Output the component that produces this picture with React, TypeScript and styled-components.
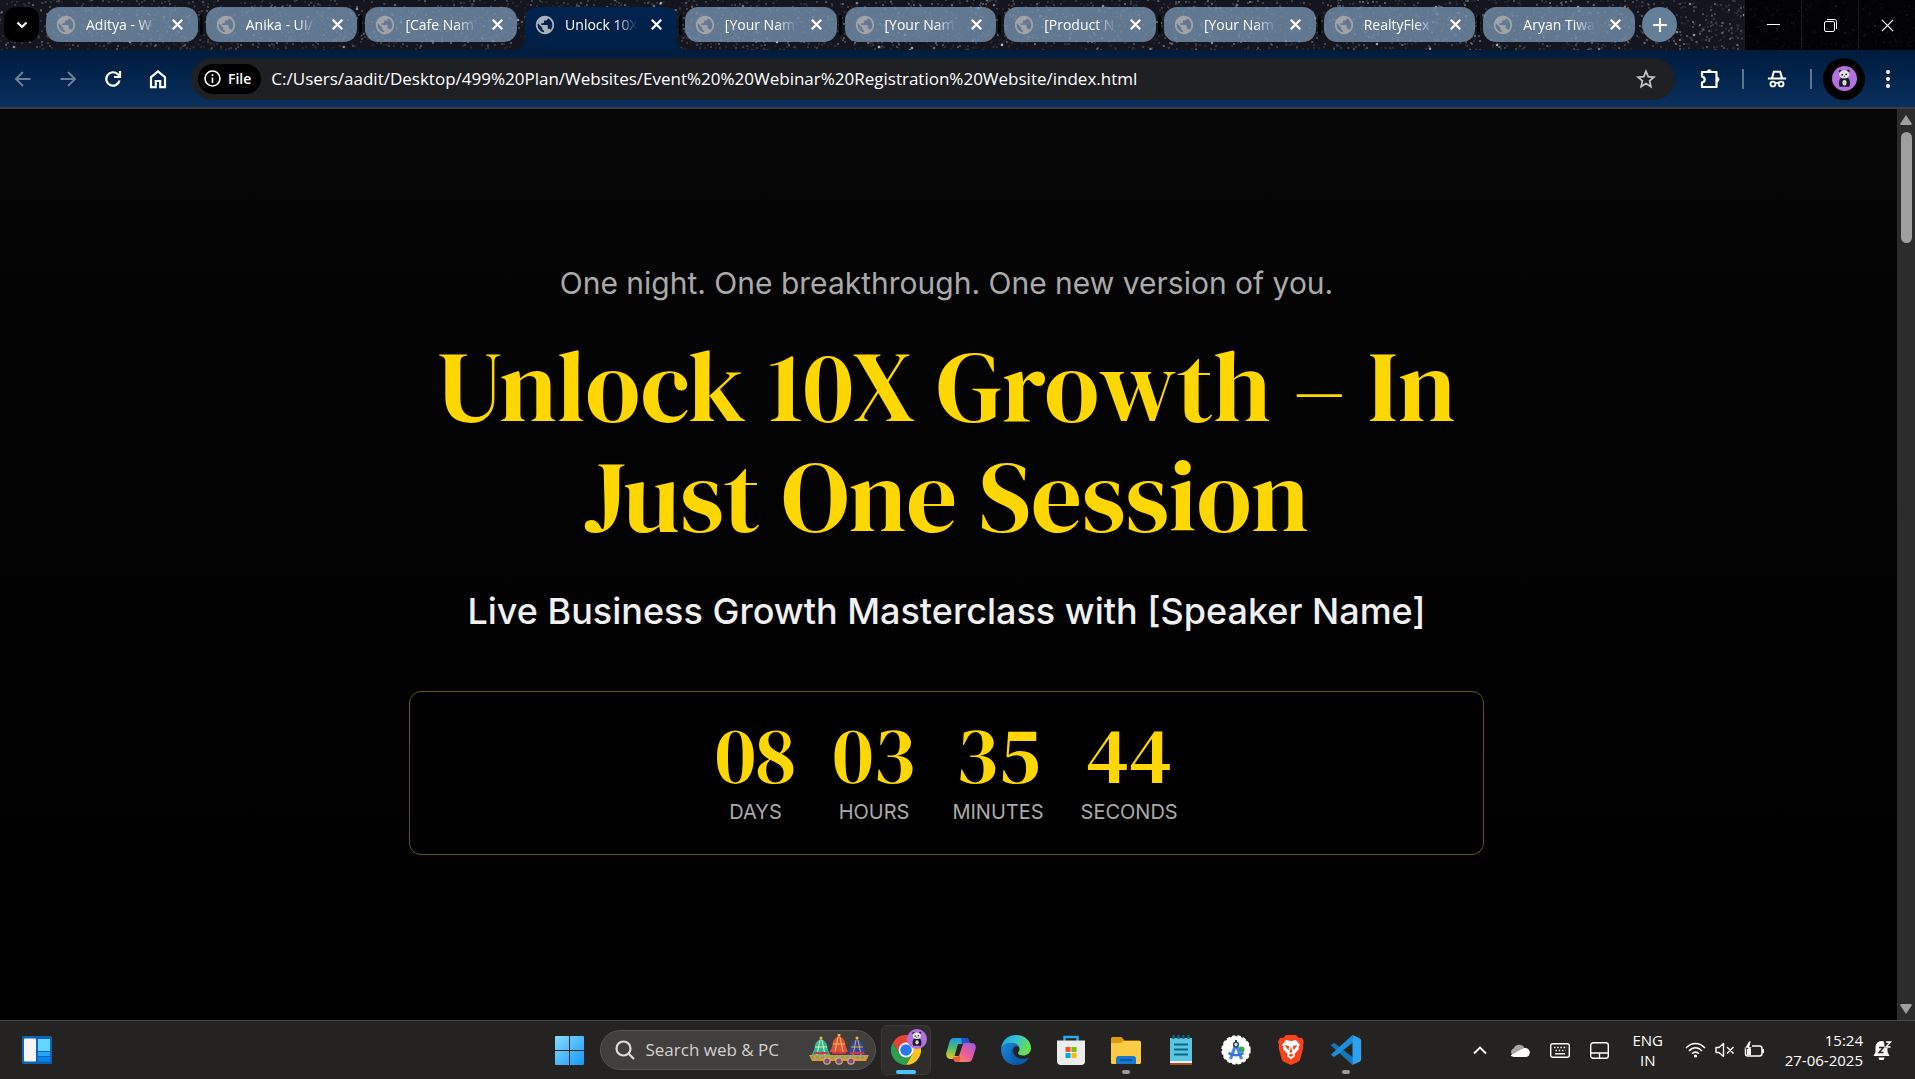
import React from "react";
import styled, { createGlobalStyle } from "styled-components";

const uiFont = `"Segoe UI", "Open Sans", "Noto Sans", sans-serif`;
const bodyFont = `Inter, "Liberation Sans", sans-serif`;
const displayFont = `"DM Serif Display", "Liberation Serif", serif`;

const GlobalStyle = createGlobalStyle`
  *, *::before, *::after { box-sizing: border-box; }
  body { margin: 0; background: #000; color: #fff; font-family: ${uiFont}; }
  h1, h2, p, ul, dl, dd { margin: 0; padding: 0; }
  button { border: 0; padding: 0; background: none; color: inherit; font: inherit; cursor: pointer; }
  svg { display: block; flex: none; }
`;

const Screen = styled.div`
  display: flex;
  flex-direction: column;
  height: 100vh;
  overflow: hidden;
`;

/* ---------- tab strip ---------- */

const TabStrip = styled.header`
  position: relative;
  display: flex;
  height: 50px;
  flex: none;
  background: #15151f;
`;

const SkyCanvas = styled.svg`
  position: absolute;
  inset: 0;
  width: 100%;
  height: 100%;
`;

const StripContent = styled.div`
  position: relative;
  display: flex;
  flex: 1;
  min-width: 0;
  align-items: flex-start;
  gap: 7px;
  padding: 7px 67px 0 4px;
`;

const TabMenuButton = styled.button`
  display: grid;
  place-items: center;
  flex: none;
  width: 35px;
  height: 35px;
  border-radius: 12px;
  background: #000;
`;

const TabList = styled.div`
  display: flex;
  flex: 1;
  min-width: 0;
  gap: 8px;
`;

const TabItem = styled.div`
  position: relative;
  display: flex;
  flex: 1;
  min-width: 0;
  align-items: center;
  gap: 9px;
  height: 35px;
  padding: 0 11px 0 9px;
  border-radius: 13px;
  background: rgba(116, 142, 170, 0.82);

  & + &::before {
    content: "";
    position: absolute;
    top: 8px;
    left: -6px;
    width: 3px;
    height: 20px;
    border-radius: 2px;
    background: #050507;
  }
`;

const ActiveTabItem = styled(TabItem)`
  height: 43px;
  padding-bottom: 8px;
  border-radius: 12px 12px 0 0;
  background: linear-gradient(#022350, #001f44);

  &&::before,
  &&::after {
    content: "";
    position: absolute;
    top: auto;
    bottom: 0;
    width: 10px;
    height: 10px;
    border-radius: 0;
  }
  &&::before { left: -10px; background: radial-gradient(circle at 0 0, transparent 10px, #001f44 10px); }
  &&::after { right: -10px; background: radial-gradient(circle at 100% 0, transparent 10px, #001f44 10px); }
`;

const TabTitle = styled.button`
  flex: 1;
  min-width: 0;
  white-space: nowrap;
  text-align: left;
  font-size: 14px;
  line-height: 20px;
  mask-image: linear-gradient(90deg, #000 68%, transparent 98%);
`;

const CloseButton = styled.button`
  display: grid;
  place-items: center;
  flex: none;
  width: 18px;
  height: 18px;
`;

const NewTabButton = styled.button`
  display: grid;
  place-items: center;
  flex: none;
  width: 35px;
  height: 35px;
  border-radius: 50%;
  background: #667f98;
`;

const WindowControls = styled.div`
  position: relative;
  display: flex;
  flex: none;
  background: rgba(0, 0, 0, 0.84);
`;

const WindowButton = styled.button`
  display: grid;
  place-items: center;
  width: 57px;
  height: 50px;
  border-left: 1px solid rgba(255, 255, 255, 0.09);
`;

/* ---------- toolbar ---------- */

const Toolbar = styled.nav`
  display: flex;
  align-items: center;
  flex: none;
  height: 59px;
  padding-right: 4px;
  border-bottom: 2px solid #3e3e3e;
  background: linear-gradient(#001c3e, #01234a 40%, #0c305e);
`;

const NavButton = styled.button<{ $dim?: boolean }>`
  display: grid;
  place-items: center;
  width: 45px;
  height: 42px;
  color: ${(p) => (p.$dim ? "#68809a" : "#fff")};
`;

const Omnibox = styled.div`
  display: flex;
  align-items: center;
  flex: 1;
  min-width: 0;
  height: 42px;
  margin-left: 11px;
  margin-right: 12px;
  padding: 0 19px 0 7px;
  border-radius: 21px;
  background: #1f2024;
`;

const FileChip = styled.button`
  display: flex;
  align-items: center;
  gap: 7px;
  flex: none;
  height: 30px;
  padding: 0 10px 0 6px;
  border-radius: 15px;
  background: #000;
  font-size: 14px;
  font-weight: 600;
`;

const AddressInput = styled.input`
  flex: 1;
  min-width: 0;
  padding: 0 0 0 10px;
  border: 0;
  outline: 0;
  background: none;
  color: #fff;
  font: 17px/24px ${uiFont};
`;

const ToolButton = styled.button<{ $width?: number }>`
  display: grid;
  place-items: center;
  width: ${(p) => p.$width ?? 46}px;
  height: 42px;
`;

const ToolDivider = styled.span`
  width: 2px;
  height: 20px;
  margin: 0 9px;
  background: #5b7590;
`;

const ProfileButton = styled.button`
  display: grid;
  place-items: center;
  flex: none;
  width: 42px;
  height: 42px;
  margin-left: 2px;
  border-radius: 50%;
  background: #000;
`;

/* ---------- web page ---------- */

const Viewport = styled.div`
  display: flex;
  flex: 1;
  min-height: 0;
  background: linear-gradient(#060606, #040404 20%, #020202 60%, #010101);
`;

const Hero = styled.main`
  display: flex;
  flex: 1;
  flex-direction: column;
  align-items: center;
  padding: 154px 4px 0 0;
  text-align: center;
  font-family: ${bodyFont};
`;

const HeroInner = styled.section`
  width: 100%;
  max-width: 1075px;
`;

const Tagline = styled.p`
  color: #aaa;
  font-size: 30px;
  line-height: 40px;
`;

const Headline = styled.h1`
  margin-top: 28px;
  color: #ffd700;
  font-family: ${displayFont};
  font-size: 100px;
  font-weight: 400;
  line-height: 110px;
`;

const Subhead = styled.h2`
  margin-top: 34px;
  color: #f0f0f0;
  font-size: 36px;
  font-weight: 500;
  line-height: 52px;
`;

const Countdown = styled.dl`
  display: flex;
  justify-content: center;
  gap: 37px;
  margin-top: 54px;
  padding: 16px 30px 32px;
  border: 1px solid #665600;
  border-radius: 12px;
  background: #000;
`;

const CountUnit = styled.div`
  display: flex;
  flex-direction: column-reverse;
  align-items: center;
`;

const CountValue = styled.dd`
  color: #ffd700;
  font-family: ${displayFont};
  font-size: 80px;
  font-weight: 400;
  line-height: 94px;
`;

const CountLabel = styled.dt`
  color: #aaa;
  font-size: 20px;
  line-height: 20px;
`;

const ScrollTrack = styled.div`
  display: flex;
  flex-direction: column;
  align-items: center;
  flex: none;
  width: 18px;
  padding: 6px 0;
  background: #2c2c2c;
`;

const ScrollThumb = styled.div`
  width: 11px;
  height: 111px;
  margin: 7px 0 auto;
  border-radius: 6px;
  background: #9f9f9f;
`;

/* ---------- taskbar ---------- */

const Taskbar = styled.footer`
  display: grid;
  grid-template-columns: 1fr auto 1fr;
  align-items: center;
  flex: none;
  height: 59px;
  border-top: 1px solid #4a4948;
  background: #242321;
`;

const WidgetsButton = styled.button`
  justify-self: start;
  margin-left: 22px;
`;

const AppRow = styled.div`
  display: flex;
  align-items: center;
  gap: 5px;
`;

const AppTile = styled.button<{ $active?: boolean }>`
  position: relative;
  display: grid;
  place-items: center;
  width: 50px;
  height: 50px;
  border: 1px solid ${(p) => (p.$active ? "#3a3938" : "transparent")};
  border-radius: 6px;
  background: ${(p) => (p.$active ? "#2f2e2d" : "none")};
`;

const RunningMark = styled.span<{ $wide?: boolean }>`
  position: absolute;
  bottom: 0;
  left: 50%;
  width: ${(p) => (p.$wide ? 20 : 8)}px;
  height: 4px;
  border-radius: 2px;
  background: ${(p) => (p.$wide ? "#4cc2ff" : "#9b9a99")};
  transform: translateX(-50%);
`;

const AccountBadge = styled.span`
  position: absolute;
  top: 3px;
  right: 3px;
`;

const SearchBox = styled.label`
  display: flex;
  align-items: center;
  width: 276px;
  height: 40px;
  padding: 0 5px 0 14px;
  border: 1px solid #565554;
  border-radius: 20px;
  background: #413f3e;
`;

const SearchInput = styled.input`
  flex: 1;
  min-width: 0;
  padding: 0 0 0 11px;
  border: 0;
  outline: 0;
  background: none;
  font: 17px/24px ${uiFont};
  &::placeholder { color: #d2d1d0; opacity: 1; }
`;

const Tray = styled.div`
  display: flex;
  align-items: center;
  justify-self: end;
  padding-right: 23px;
`;

const TrayButton = styled.button`
  display: grid;
  place-items: center;
  width: 40px;
  height: 40px;
`;

const Language = styled.button`
  width: 56px;
  font-size: 15px;
  line-height: 20px;
  text-align: center;
`;

const QuickSettings = styled.button`
  display: flex;
  align-items: center;
  gap: 9px;
  margin-left: 9px;
`;

const Clock = styled.button`
  display: flex;
  align-items: center;
  gap: 10px;
  margin-left: 20px;
  font-size: 15px;
  line-height: 20px;
  text-align: right;
`;

/* ---------- drawings ---------- */

type Star = { x: number; y: number; r: number; o: number };

const makeStars = (count: number): Star[] => {
  let seed = 20717;
  const next = () => {
    seed = (seed * 16807) % 2147483647;
    return seed / 2147483647;
  };
  return Array.from({ length: count }, () => ({
    x: Math.round(next() * 1920),
    y: Math.round(next() * 50),
    r: next() > 0.93 ? 1.3 : 0.8,
    o: 0.15 + next() * next() * 0.85,
  }));
};

const stars = makeStars(4200);

const NightSky = () => (
  <SkyCanvas viewBox="0 0 1920 50" preserveAspectRatio="xMinYMin slice" aria-hidden="true">
    {stars.map((s, i) => (
      <circle key={i} cx={s.x} cy={s.y} r={s.r} fill="#c9c9dd" opacity={s.o} />
    ))}
  </SkyCanvas>
);

const Globe = ({ color }: { color: string }) => (
  <svg width="22" height="22" viewBox="0 0 24 24" aria-hidden="true">
    <path
      d="M12 2C6.480 2 2 6.480 2 12s4.480 10 10 10 10-4.480 10-10S17.520 2 12 2zm-1 17.930c-3.950-.49-7-3.850-7-7.930 0-.62.08-1.210.21-1.790L9 15v1c0 1.100.9 2 2 2v1.930zm6.900-2.540c-.26-.81-1-1.390-1.900-1.390h-1v-3c0-.55-.45-1-1-1H8v-2h2c.55 0 1-.45 1-1V7h2c1.100 0 2-.9 2-2v-.41c2.930 1.190 5 4.060 5 7.410 0 2.080-.8 3.970-2.100 5.390z"
      fill={color}
    />
  </svg>
);

const Cross = ({ size = 11, width = 2 }: { size?: number; width?: number }) => (
  <svg width={size} height={size} viewBox="0 0 10 10" stroke="#fff" strokeWidth={width} aria-hidden="true">
    <path d="M.7.7l8.600 8.600M9.300.7.7 9.300" />
  </svg>
);

const Panda = ({ size }: { size: number }) => (
  <svg width={size} height={size} viewBox="0 0 24 24" aria-hidden="true">
    <circle cx="12" cy="12" r="12" fill="#b46fe0" />
    <path d="M8.500 11.500c-2 2-2.200 5.500-1.200 8.500h9.400c1-3 .8-6.500-1.200-8.500Z" fill="#1b1b1f" />
    <ellipse cx="12" cy="16" rx="2" ry="2.600" fill="#dcdce2" />
    <circle cx="8" cy="5" r="1.500" fill="#26262b" />
    <circle cx="15.500" cy="4.800" r="1.500" fill="#26262b" />
    <ellipse cx="11.800" cy="8" rx="4.900" ry="3.900" fill="#e4e4e8" />
    <circle cx="9.800" cy="8.400" r=".9" fill="#26262b" />
    <circle cx="13.600" cy="8" r=".9" fill="#26262b" />
    <circle cx="11.800" cy="9.900" r=".6" fill="#26262b" />
  </svg>
);

const Chariots = () => {
  const tents = [
    { x: 13, c: "#35b59c", d: "#d8f0a0", s: 0 },
    { x: 49, c: "#3346a8", d: "#e0b040", s: 0 },
    { x: 31, c: "#e0503f", d: "#f7c04a", s: 3 },
  ];
  return (
    <svg width="62" height="32" viewBox="0 0 62 32" aria-hidden="true">
      {tents.map((t) => (
        <g key={t.x}>
          <path d={`M${t.x} ${4 - t.s}c1 2 5 3 6 7 .5 4 1.500 7 3.500 10H${t.x - 9.5}c2-3 3-6 3.500-10 1-4 5-5 6-7Z`} fill={t.c} />
          <path d={`M${t.x - 1} ${6 - t.s}l-3 15M${t.x + 1} ${6 - t.s}l3 15M${t.x - 6} ${13 - t.s}h12`} stroke={t.d} strokeWidth="1" fill="none" />
          <path d={`M${t.x - 7} 19h14`} stroke="#c13a5a" strokeWidth="2" />
          <circle cx={t.x} cy={4 - t.s} r="1.500" fill="#f4b942" />
        </g>
      ))}
      <path d="M1 21h60l-3 6H4Z" fill="#d9973a" />
      <path d="M3 23.500h56" stroke="#3fae98" strokeWidth="1.500" strokeDasharray="3 2" />
      {[19, 31, 43].map((x) => (
        <circle key={x} cx={x} cy="27" r="3.200" fill="#7c4aa0" stroke="#e0b050" strokeWidth="1.200" />
      ))}
    </svg>
  );
};

const StartLogo = () => (
  <svg width="29" height="29" viewBox="0 0 29 29" aria-hidden="true">
    <defs>
      <linearGradient id="start" x1="0" y1="0" x2="1" y2="1" gradientUnits="objectBoundingBox">
        <stop offset="0" stopColor="#86dcff" />
        <stop offset="1" stopColor="#1698f4" />
      </linearGradient>
    </defs>
    <path d="M1 0h13v14H0V1a1 1 0 0 1 1-1ZM15 0h13a1 1 0 0 1 1 1v13H15ZM0 15h14v14H1a1 1 0 0 1-1-1ZM15 15h14v13a1 1 0 0 1-1 1H15Z" fill="url(#start)" />
  </svg>
);

const ChromeLogo = () => (
  <svg width="30" height="30" viewBox="0 0 30 30" aria-hidden="true">
    <path d="M2 7.500A15 15 0 0 1 28 7.500H15L8.500 18.700Z" fill="#e94335" />
    <path d="M28 7.500A15 15 0 0 1 15 30L21.500 18.800 21.500 11.200 15 7.500Z" fill="#fcc31e" />
    <path d="M15 30A15 15 0 0 1 2 7.500L8.500 18.750 15 22.500 21.500 18.750Z" fill="#2f9e4c" />
    <circle cx="15" cy="15" r="7.400" fill="#fff" />
    <circle cx="15" cy="15" r="5.800" fill="#2b78ee" />
  </svg>
);

const CopilotLogo = () => (
  <svg width="30" height="28" viewBox="0 0 30 28" aria-hidden="true">
    <defs>
      <linearGradient id="copA" x1="0" y1="0" x2="0" y2="1">
        <stop offset="0" stopColor="#1a9bea" />
        <stop offset=".5" stopColor="#53bd6b" />
        <stop offset="1" stopColor="#f4c51f" />
      </linearGradient>
      <linearGradient id="copB" x1="1" y1="0" x2="0" y2="1">
        <stop offset="0" stopColor="#9a57e8" />
        <stop offset=".5" stopColor="#ec5b9b" />
        <stop offset="1" stopColor="#fb9a4b" />
      </linearGradient>
    </defs>
    <path d="M8 2h12c2 0 2.500 1.500 3 3l1 3h-4c-2 0-3 1-3.500 3l-3 9c-.5 2-1.500 3-4 3H5c-4 0-5.500-3-4.500-7l3-10C4.300 3.500 5.500 2 8 2Z" fill="url(#copA)" />
    <path d="M15 2h5c2 0 2.500 1.500 3 3l1 3h-4c-2 0-3 1-3.500 3Z" fill="#2450cf" />
    <path d="M22 26H11c-2 0-3-1-3.500-3L7 21h3c2 0 3-1 3.500-3l3-9c.5-1.500 1.500-2 4-2H25c4 0 5.500 2.500 4.500 6l-3 9.500c-.8 2.500-2 3.500-4.500 3.500Z" fill="url(#copB)" />
    <path d="M12 8h5l-4 12H8.500Z" fill="#242321" />
    <path d="M7 21h3c2 0 3-1 3.500-3l1 5c-.5 2-1 3-3 3-2.500 0-3.500-1-4-3Z" fill="#ef5a3c" />
  </svg>
);

const EdgeLogo = () => (
  <svg width="30" height="30" viewBox="0 0 30 30" aria-hidden="true">
    <defs>
      <linearGradient id="edgeTop" x1="0" y1="0" x2="1" y2=".4">
        <stop offset="0" stopColor="#1b9de0" />
        <stop offset=".5" stopColor="#35c1d4" />
        <stop offset="1" stopColor="#6be04c" />
      </linearGradient>
      <linearGradient id="edgeSide" x1="0" y1="0" x2="1" y2="1">
        <stop offset="0" stopColor="#1a8ad8" />
        <stop offset="1" stopColor="#0b4fa3" />
      </linearGradient>
    </defs>
    <path d="M15 30A15 15 0 0 0 28 22.500c-4 2-10 2-13.500-1.500-3-3-3-7-.5-10L4 8c-5 8-3 21 11 22Z" fill="#0d5cab" />
    <path d="M0 14C1 5 7 0 15 0c9 0 15 6 15 13 0 5-4 7.500-8 7.500-3 0-5-1-5-2.500 0-1 1.500-1.500 1.500-4 0-3-3-6-8-6C5 8 1 11 0 14Z" fill="url(#edgeTop)" />
    <path d="M0 14c1-3.500 5-6 10-6 4 0 7 2 8 4-4-2-8 1-8 6 0 5 4 9 10 9.500C18 29.500 16 30 15 30 6 30 0 23 0 14Z" fill="url(#edgeSide)" />
  </svg>
);

const StoreLogo = () => (
  <svg width="30" height="30" viewBox="0 0 30 30" aria-hidden="true">
    <path d="M8.500 8V2h13v6" fill="none" stroke="#2aa9e8" strokeWidth="2.500" />
    <path d="M1 5.500h28V26a4 4 0 0 1-4 4H5a4 4 0 0 1-4-4Z" fill="#ececec" />
    <path d="M9.500 12h5v5h-5Z" fill="#f25022" />
    <path d="M15.500 12h5v5h-5Z" fill="#7fba00" />
    <path d="M9.500 18h5v5h-5Z" fill="#00a4ef" />
    <path d="M15.500 18h5v5h-5Z" fill="#ffb900" />
  </svg>
);

const FolderLogo = () => (
  <svg width="30" height="28" viewBox="0 0 30 28" aria-hidden="true">
    <path d="M1.500 1h9l3 3.500H28a1.500 1.500 0 0 1 1.500 1.500v4H0V2.500A1.500 1.500 0 0 1 1.500 1Z" fill="#dc9b0c" />
    <path d="M0 7h10l3-2h15.500A1.500 1.500 0 0 1 30 6.500v20a1.500 1.500 0 0 1-1.500 1.500h-27A1.500 1.500 0 0 1 0 26.500Z" fill="#fdcb43" />
    <path d="M5 28v-5a3 3 0 0 1 3-3h14a3 3 0 0 1 3 3v5Z" fill="#1778d2" />
    <path d="M9 24h12" stroke="#0a4d93" strokeWidth="1.500" />
  </svg>
);

const NotepadLogo = () => (
  <svg width="22" height="30" viewBox="0 0 22 30" aria-hidden="true">
    <path d="M0 3h22v24H0Z" fill="#5cc6e0" />
    <path d="M0 26h22v2H0Z" fill="#eee" />
    <path d="M0 28h22v2H0Z" fill="#a4531c" />
    <path d="M3.500 0v4M8.500 0v4M13.500 0v4M18.500 0v4" stroke="#0b6a8c" strokeWidth="2.200" />
    <path d="M4 9.500h14M4 14.500h14M4 19.500h14" stroke="#08668b" strokeWidth="1.800" />
  </svg>
);

const StudioLogo = () => (
  <svg width="30" height="30" viewBox="0 0 30 30" aria-hidden="true">
    <circle cx="15" cy="15" r="13.800" fill="#fff" />
    <circle cx="15" cy="15" r="13.800" fill="none" stroke="#fff" strokeWidth="1.800" strokeDasharray="3.500 2" />
    <circle cx="20.500" cy="14.500" r="3" fill="#34a853" />
    <path d="m15 9-5.500 15M15 9l5.500 15" stroke="#4a86ee" strokeWidth="3.200" />
    <path d="M7.500 18c4 3 11 3 15 0" stroke="#3473e0" strokeWidth="2.400" fill="none" />
    <circle cx="15" cy="9.500" r="2.400" fill="#d8e3f5" stroke="#30445f" strokeWidth="1.400" />
    <path d="M15 5v3" stroke="#30445f" strokeWidth="2" />
  </svg>
);

const BraveLogo = () => (
  <svg width="26" height="30" viewBox="0 0 26 30" aria-hidden="true">
    <path d="M8 0h10l3 3 3-.2L26 7l-1 3 .3 3-3 11c-.5 1.500-1 2-2 2.800L13 30l-7.300-3.200c-1-.8-1.500-1.300-2-2.800L.7 13 1 10 0 7l2-4.200L5 3Z" fill="#f9411c" />
    <path d="m8 5 5 1 5-1 4 5-1.500 2 .5 2-4.500 5 .5 2-4 3.500L9 21l.5-2L5 14l.5-2L4 10Z" fill="#fff" />
    <path d="m6.500 10 4.500 1-.5 4.500ZM19.500 10 15 11l.5 4.500ZM13 11.500l1.300 5.500-1.300 1-1.300-1ZM10.500 20l2.500-1.300L15.500 20 13 22Z" fill="#f9411c" />
  </svg>
);

const CodeLogo = () => (
  <svg width="30" height="30" viewBox="0 0 30 30" aria-hidden="true">
    <path d="M22 22.500 3.800 8.300l-2 .2L0 10.500 21.500 30Z" fill="#1278be" />
    <path d="M22 7.500 3.800 21.700l-2-.2L0 19.500 21.500 0Z" fill="#1c8fd6" />
    <path d="m21.500 0 7 3.200A2 2 0 0 1 30 5v20a2 2 0 0 1-1.500 1.800l-7 3.200Z" fill="#2aa4f0" />
  </svg>
);

const WidgetsLogo = () => (
  <svg width="30" height="28" viewBox="0 0 30 28" aria-hidden="true">
    <rect width="30" height="28" rx="1.500" fill="#0f62b6" />
    <rect x="2" y="2.500" width="12" height="23" rx="1" fill="#f4f4f4" />
    <path d="M16 3h12v12H16Z" fill="#66d6ff" />
    <path d="M16 16h12v4H16Z" fill="#27a6f8" />
    <path d="M16 21h12v4.500H16Z" fill="#0a84ea" />
  </svg>
);

const Line = ({ size = 22, width = 2, children }: { size?: number; width?: number; children: React.ReactNode }) => (
  <svg width={size} height={size} viewBox="0 0 22 22" fill="none" stroke="currentColor" strokeWidth={width} aria-hidden="true">
    {children}
  </svg>
);

/* ---------- content ---------- */

const tabs = [
  "Aditya - W",
  "Anika - UI/",
  "[Cafe Nam",
  "Unlock 10X",
  "[Your Nam",
  "[Your Nam",
  "[Product N",
  "[Your Nam",
  "RealtyFlex",
  "Aryan Tiwa",
];
const activeTab = 3;

const countdown = [
  { label: "DAYS", value: "08" },
  { label: "HOURS", value: "03" },
  { label: "MINUTES", value: "35" },
  { label: "SECONDS", value: "44" },
];

const apps = [
  { name: "Copilot", icon: <CopilotLogo /> },
  { name: "Edge", icon: <EdgeLogo /> },
  { name: "Store", icon: <StoreLogo /> },
  { name: "File Explorer", icon: <FolderLogo />, running: true },
  { name: "Notepad", icon: <NotepadLogo /> },
  { name: "Android Studio", icon: <StudioLogo /> },
  { name: "Brave", icon: <BraveLogo /> },
  { name: "Visual Studio Code", icon: <CodeLogo />, running: true },
];

const BrowserTabs = () => (
  <TabStrip>
    <NightSky />
    <StripContent>
      <TabMenuButton aria-label="Search tabs">
        <svg width="12" height="8" viewBox="0 0 12 8" fill="none" stroke="#fff" strokeWidth="2.200" aria-hidden="true">
          <path d="m1.500 1.500 4.500 4.500 4.500-4.500" />
        </svg>
      </TabMenuButton>
      <TabList>
        {tabs.map((title, i) => {
          const Item = i === activeTab ? ActiveTabItem : TabItem;
          return (
            <Item key={i}>
              <Globe color={i === activeTab ? "#a9b1ba" : "#a0a3a8"} />
              <TabTitle>{title}</TabTitle>
              <CloseButton aria-label="Close tab">
                <Cross />
              </CloseButton>
            </Item>
          );
        })}
      </TabList>
      <NewTabButton aria-label="New tab">
        <svg width="14" height="14" viewBox="0 0 14 14" stroke="#fff" strokeWidth="2" aria-hidden="true">
          <path d="M7 0v14M0 7h14" />
        </svg>
      </NewTabButton>
    </StripContent>
    <WindowControls>
      <WindowButton aria-label="Minimize">
        <svg width="13" height="13" viewBox="0 0 13 13" stroke="#fff" aria-hidden="true">
          <path d="M0 5.500h13" />
        </svg>
      </WindowButton>
      <WindowButton aria-label="Restore">
        <svg width="13" height="13" viewBox="0 0 13 13" fill="none" stroke="#fff" aria-hidden="true">
          <rect x=".5" y="2.500" width="10" height="10" rx="1.500" />
          <path d="M3 .5h7.500a2 2 0 0 1 2 2V10" />
        </svg>
      </WindowButton>
      <WindowButton aria-label="Close">
        <Cross size={13} width={0.9} />
      </WindowButton>
    </WindowControls>
  </TabStrip>
);

const BrowserToolbar = () => (
  <Toolbar>
    <NavButton $dim aria-label="Back">
      <Line><path d="M18.500 11H4M11 4l-7 7 7 7" /></Line>
    </NavButton>
    <NavButton $dim aria-label="Forward">
      <Line><path d="M3.500 11H18M11 4l7 7-7 7" /></Line>
    </NavButton>
    <NavButton aria-label="Reload">
      <Line width={2.2}>
        <path d="M17.500 12.500a6.700 6.700 0 1 1-1.700-6.200L18 8.500" />
        <path d="M18 3v6h-6" />
      </Line>
    </NavButton>
    <NavButton aria-label="Home">
      <Line width={2.2}>
        <path d="M4 9.200 11 3.500l7 5.700v10h-4.800V13H8.800v6.200H4Z" />
      </Line>
    </NavButton>
    <Omnibox>
      <FileChip>
        <svg width="17" height="17" viewBox="0 0 17 17" fill="none" stroke="#fff" strokeWidth="1.600" aria-hidden="true">
          <circle cx="8.500" cy="8.500" r="7.500" />
          <path d="M8.500 7.500V13M8.500 4.200V6" />
        </svg>
        File
      </FileChip>
      <AddressInput
        aria-label="Address"
        defaultValue="C:/Users/aadit/Desktop/499%20Plan/Websites/Event%20%20Webinar%20Registration%20Website/index.html"
      />
      <button aria-label="Bookmark this page">
        <svg width="20" height="20" viewBox="0 0 20 20" fill="none" stroke="#c7c7c9" strokeWidth="1.700" aria-hidden="true">
          <path d="m10 2.200 2.200 5.400 5.800.5-4.400 3.800 1.300 5.700-4.900-3-4.900 3 1.300-5.700L2 8.100l5.800-.5Z" />
        </svg>
      </button>
    </Omnibox>
    <ToolButton aria-label="Extensions">
      <Line width={2.2}>
        <path d="M3 4h14.500v15H3v-4.500c3.600-.6 3.600-5.300 0-5.900Z" strokeLinejoin="round" />
        <path d="M8 4a2.200 2.200 0 0 1 4.400 0ZM17.800 9.200a2.200 2.200 0 0 1 0 4.400Z" fill="currentColor" strokeWidth="1" />
      </Line>
    </ToolButton>
    <ToolDivider />
    <ToolButton aria-label="Incognito" $width={48}>
      <Line size={20}>
        <path d="M1 10.500h20M5.500 10 7.500 3h7l2 7" strokeWidth="2.200" />
        <circle cx="6.500" cy="16.500" r="2.700" />
        <circle cx="15.500" cy="16.500" r="2.700" />
        <path d="M9 16c1-1 3-1 4 0" />
      </Line>
    </ToolButton>
    <ToolDivider />
    <ProfileButton aria-label="Profile">
      <Panda size={25} />
    </ProfileButton>
    <ToolButton aria-label="Menu">
      <svg width="4" height="18" viewBox="0 0 4 18" fill="#fff" aria-hidden="true">
        <circle cx="2" cy="2" r="2" />
        <circle cx="2" cy="9" r="2" />
        <circle cx="2" cy="16" r="2" />
      </svg>
    </ToolButton>
  </Toolbar>
);

const DesktopTaskbar = () => (
  <Taskbar>
    <WidgetsButton aria-label="Widgets">
      <WidgetsLogo />
    </WidgetsButton>
    <AppRow>
      <AppTile aria-label="Start">
        <StartLogo />
      </AppTile>
      <SearchBox>
        <svg width="20" height="20" viewBox="0 0 20 20" fill="none" stroke="#dcdcdc" strokeWidth="2.200" aria-hidden="true">
          <circle cx="8.500" cy="8.500" r="7" />
          <path d="m13.500 13.500 5.500 5.500" />
        </svg>
        <SearchInput aria-label="Search" placeholder="Search web &amp; PC" />
        <Chariots />
      </SearchBox>
      <AppTile $active aria-label="Chrome">
        <ChromeLogo />
        <AccountBadge><Panda size={20} /></AccountBadge>
        <RunningMark $wide />
      </AppTile>
      {apps.map((app) => (
        <AppTile key={app.name} aria-label={app.name}>
          {app.icon}
          {app.running && <RunningMark />}
        </AppTile>
      ))}
    </AppRow>
    <Tray>
      <TrayButton aria-label="Show hidden icons">
        <svg width="14" height="9" viewBox="0 0 14 9" fill="none" stroke="#fff" strokeWidth="1.800" aria-hidden="true">
          <path d="m1 7.500 6-6 6 6" />
        </svg>
      </TrayButton>
      <TrayButton aria-label="OneDrive">
        <svg width="20" height="13" viewBox="0 0 20 13" aria-hidden="true">
          <path d="M4 12a4 4 0 0 1-.3-7.600A6 6 0 0 1 14.500 4L9 9Z" fill="#a5a5a5" />
          <path d="M14.500 4a4.500 4.500 0 0 1 1.500 9H4c-1.500 0-2.500-.6-3.300-1.700L11 5.500Z" fill="#fff" />
        </svg>
      </TrayButton>
      <TrayButton aria-label="Touch keyboard">
        <svg width="20" height="15" viewBox="0 0 20 15" fill="none" stroke="#fff" strokeWidth="1.400" aria-hidden="true">
          <rect x=".7" y=".7" width="18.600" height="13.600" rx="2" />
          <path d="M4 4.500h13" strokeDasharray="1.500 1.700" />
          <path d="M5.500 7.500h10" strokeDasharray="1.500 1.700" />
          <path d="M5 10.800h10" />
        </svg>
      </TrayButton>
      <TrayButton aria-label="Virtual touchpad">
        <svg width="19" height="17" viewBox="0 0 19 17" fill="none" stroke="#fff" strokeWidth="1.400" aria-hidden="true">
          <rect x=".7" y=".7" width="17.600" height="15.600" rx="2.500" />
          <path d="M1 11h17M9.500 11v5" />
        </svg>
      </TrayButton>
      <Language>ENG<br />IN</Language>
      <QuickSettings aria-label="Network, sound and battery">
        <svg width="21" height="16" viewBox="0 0 21 16" fill="none" stroke="#fff" strokeWidth="1.600" aria-hidden="true">
          <path d="M1 6c5.500-6 13.500-6 19 0M4 9c4-4.300 9-4.300 13 0M7 11.800c2.200-2.300 4.800-2.300 7 0" />
          <circle cx="10.500" cy="14" r="1.600" fill="#fff" stroke="none" />
        </svg>
        <svg width="20" height="16" viewBox="0 0 20 16" fill="none" stroke="#fff" strokeWidth="1.400" strokeLinejoin="round" aria-hidden="true">
          <path d="M1 5.500h3L8.500 1.500v13L4 10.500H1ZM12 5l6.500 6.500M18.500 5 12 11.500" />
        </svg>
        <svg width="21" height="18" viewBox="0 0 21 18" fill="none" stroke="#fff" strokeWidth="1.500" aria-hidden="true">
          <path d="M8 5h7.500a2.500 2.500 0 0 1 2.500 2.500v5a2.500 2.500 0 0 1-2.500 2.500H4a2.500 2.500 0 0 1-2.500-2.500V6" />
          <path d="M18 8h2v4h-2Z" fill="#fff" stroke="none" />
          <path d="M5 0 1 7h3l-1 6 5-7H5.500L7 0Z" fill="#fff" stroke="#242321" strokeWidth=".6" />
          <path d="M3 8h4v6H3Z" fill="#fff" stroke="none" />
        </svg>
      </QuickSettings>
      <Clock>
        <span>15:24<br />27-06-2025</span>
        <svg width="19" height="20" viewBox="0 0 19 20" aria-hidden="true">
          <path d="M9 1a6 6 0 0 0-6.500 6v5L.5 16h16l-2-4V7A6 6 0 0 0 9 1ZM5.500 17.500a3 3 0 0 0 6 0Z" fill="#fff" />
          <path d="M6 7.500h4.500L6 12.500h4.500" stroke="#242321" strokeWidth="1.500" fill="none" />
          <path d="M10.500 0H19v8h-7Z" fill="#242321" />
          <path d="M13 2h4.500L13 7h4.500" stroke="#fff" strokeWidth="1.400" fill="none" />
        </svg>
      </Clock>
    </Tray>
  </Taskbar>
);

export default function App() {
  return (
    <Screen>
      <GlobalStyle />
      <BrowserTabs />
      <BrowserToolbar />
      <Viewport>
        <Hero>
          <HeroInner>
            <Tagline>One night. One breakthrough. One new version of you.</Tagline>
            <Headline>Unlock 10X Growth – In Just One Session</Headline>
            <Subhead>Live Business Growth Masterclass with [Speaker Name]</Subhead>
            <Countdown>
              {countdown.map((unit) => (
                <CountUnit key={unit.label}>
                  <CountLabel>{unit.label}</CountLabel>
                  <CountValue>{unit.value}</CountValue>
                </CountUnit>
              ))}
            </Countdown>
          </HeroInner>
        </Hero>
        <ScrollTrack aria-hidden="true">
          <svg width="12" height="10" viewBox="0 0 12 10" fill="#9f9f9f">
            <path d="m6 0 6 9-1 1H1L0 9Z" />
          </svg>
          <ScrollThumb />
          <svg width="12" height="10" viewBox="0 0 12 10" fill="#9f9f9f">
            <path d="M6 10 0 1l1-1h10l1 1Z" />
          </svg>
        </ScrollTrack>
      </Viewport>
      <DesktopTaskbar />
    </Screen>
  );
}
